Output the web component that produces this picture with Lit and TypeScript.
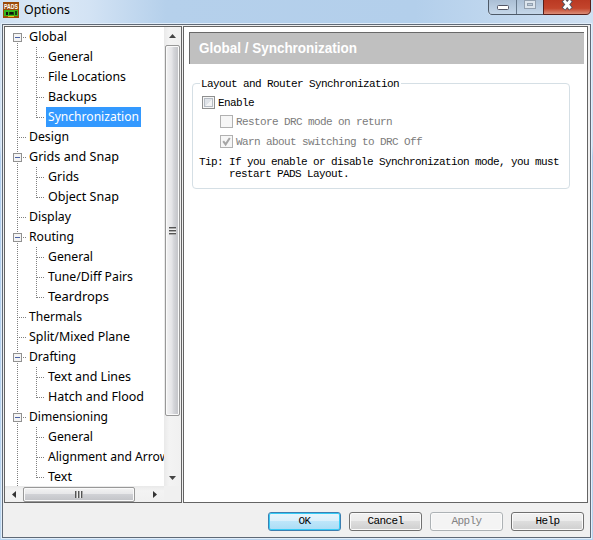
import { LitElement, html, css, svg } from "lit";
import { customElement, property } from "lit/decorators.js";
import { classMap } from "lit/directives/class-map.js";

type Row = { text: string; width: number; level: number; open?: boolean; last?: boolean; selected?: boolean };

const ROWS: Row[] = [
  { text: "Global", width: 38, level: 0, open: true },
  { text: "General", width: 45, level: 1 },
  { text: "File Locations", width: 78, level: 1 },
  { text: "Backups", width: 49, level: 1 },
  { text: "Synchronization", width: 91, level: 1, last: true, selected: true },
  { text: "Design", width: 40, level: 0 },
  { text: "Grids and Snap", width: 90, level: 0, open: true },
  { text: "Grids", width: 31, level: 1 },
  { text: "Object Snap", width: 71, level: 1, last: true },
  { text: "Display", width: 42, level: 0 },
  { text: "Routing", width: 45, level: 0, open: true },
  { text: "General", width: 45, level: 1 },
  { text: "Tune/Diff Pairs", width: 85, level: 1 },
  { text: "Teardrops", width: 61, level: 1, last: true },
  { text: "Thermals", width: 53, level: 0 },
  { text: "Split/Mixed Plane", width: 101, level: 0 },
  { text: "Drafting", width: 47, level: 0, open: true },
  { text: "Text and Lines", width: 83, level: 1 },
  { text: "Hatch and Flood", width: 96, level: 1, last: true },
  { text: "Dimensioning", width: 79, level: 0, open: true },
  { text: "General", width: 45, level: 1 },
  { text: "Alignment and Arrows", width: 127, level: 1 },
  { text: "Text", width: 24, level: 1, last: true },
];

@customElement("fit-text")
class FitText extends LitElement {
  @property() text = "";
  @property({ type: Number }) width = 0;
  @property({ type: Number }) size = 13;
  @property() weight = "400";
  @property() family = "Noto Sans";
  static styles = css`
    :host { display: block; height: 20px; letter-spacing: 0; }
    svg { display: block; overflow: visible; height: 20px; }
    text { fill: currentColor; }
  `;
  render() {
    return html`<svg width=${this.width} height="20">
      ${svg`<text x="0" y="14" textLength=${this.width} lengthAdjust="spacingAndGlyphs" font-size=${this.size} font-weight=${this.weight} font-family="${this.family}, sans-serif">${this.text}</text>`}
    </svg>`;
  }
}

@customElement("options-tree")
class OptionsTree extends LitElement {
  static styles = css`
    :host { display: grid; grid-template: 459px 16px / 159px 17px; box-sizing: border-box; width: 178px; height: 477px; border: 1px solid #646464; background: #fff; color: #000; }
    .rows { overflow: hidden; }
    .row { display: flex; height: 20px; }
    .guide { flex: none; display: block; }
    .label { flex: none; padding: 0 1px 0 2px; margin-left: -2px; height: 20px; }
    .label.selected { background: #3399ff; color: #fff; padding-right: 2px; }
    .v { display: flex; flex-direction: column; align-items: center; background: linear-gradient(90deg, #e9e9e9, #f3f3f3 30%, #f0f0f0); }
    .h { display: flex; align-items: center; background: linear-gradient(#e9e9e9, #f3f3f3 30%, #f0f0f0); }
    .corner { background: #f0f0f0; }
    .up { height: 18px; } .down { height: 17px; }
    .arrow { display: grid; place-items: center; flex: none; }
    .arrow svg { display: block; }
    .space { flex: 1; }
    .thumb { box-sizing: border-box; display: flex; align-items: center; justify-content: center; border: 1px solid #989898; border-radius: 2px; box-shadow: inset 0 0 0 1px #fafafa; flex: none; }
    .v .thumb { width: 15px; height: 371px; background: linear-gradient(90deg, #f3f3f3, #e4e4e7 45%, #d4d5d9 60%, #c0c1c5); }
    .h .thumb { height: 15px; width: 112px; background: linear-gradient(#f3f3f3, #e7e7e9 45%, #d0d1d5 50%, #c2c3c7); }
    .v .grip { width: 7px; height: 8px; background: repeating-linear-gradient(#555 0 1px, #aaa 1px 2px, #eee 2px 3px); }
    .h .grip { width: 8px; height: 7px; background: repeating-linear-gradient(90deg, #555 0 1px, #aaa 1px 2px, #eee 2px 3px); }
    .left, .right { width: 18px; }
  `;
  guide(r: Row, i: number) {
    const w = r.level ? 43 : 24;
    const dash = "1 1";
    return svg`<svg class="guide" width=${w} height="20" shape-rendering="crispEdges" fill="none" stroke="#808080">
      <path stroke-dasharray=${dash} d=${i === 0 ? "M12.5 10V20" : "M12.5 0V20"} />
      ${r.level
        ? svg`<path stroke-dasharray=${dash} d=${r.last ? "M31.5 0V11" : "M31.5 0V20"} /><path stroke-dasharray=${dash} d="M32 10.5H40" />`
        : svg`<path stroke-dasharray=${dash} d="M14 10.5H21" />`}
      ${r.open
        ? svg`<rect x="8.5" y="6.5" width="8" height="8" fill="#f4f4f4" stroke="#919191" /><path stroke="#4b63a7" d="M10 10.5H15" />`
        : null}
    </svg>`;
  }
  render() {
    return html`
      <div class="rows">
        ${ROWS.map((r, i) => html`<div class="row">${this.guide(r, i)}<div class=${classMap({ label: true, selected: !!r.selected })}><fit-text .text=${r.text} .width=${r.width}></fit-text></div></div>`)}
      </div>
      <div class="v">
        <div class="arrow up"><svg width="7" height="4"><path d="M0 4L3.5 0L7 4z" fill="#444" /></svg></div>
        <div class="thumb"><div class="grip"></div></div>
        <div class="space"></div>
        <div class="arrow down"><svg width="7" height="4"><path d="M0 0L3.5 4L7 0z" fill="#444" /></svg></div>
      </div>
      <div class="h">
        <div class="arrow left"><svg width="4" height="7"><path d="M4 0L0 3.5L4 7z" fill="#333" /></svg></div>
        <div class="thumb"><div class="grip"></div></div>
        <div class="space"></div>
        <div class="arrow right"><svg width="4" height="7"><path d="M0 0L4 3.5L0 7z" fill="#333" /></svg></div>
      </div>
      <div class="corner"></div>`;
  }
}

@customElement("app-root")
class AppRoot extends LitElement {
  static styles = css`
    :host { display: flex; flex-direction: column; width: 593px; height: 540px; box-sizing: border-box; overflow: hidden; background: linear-gradient(#d5e4f4, #cfe0f2 27%, #b0cdec 29%, #b9d4ee); font: 11px/12px "Liberation Mono", monospace; letter-spacing: -0.6px; color: #000; }
    .title { display: flex; height: 24px; flex: none; background: linear-gradient(90deg, #cfe0f2, #dce9f6 8%, #d3e3f4 15%, #b5d0eb 28%, #b3cfeb 70%, #cfe0f2); }
    .logo { margin: 2px 5px 0 3px; letter-spacing: 0; overflow: visible; }
    .name { width: 464px; }
    .controls { display: block; }
    .body { display: flex; flex-direction: column; box-sizing: border-box; width: 589px; height: 514px; margin-left: 2px; border: 1px solid #5f6976; background: #f0f0f0; box-shadow: 0 0 0 1px #e2eefa; }
    .panes { display: flex; gap: 1px; padding: 1px 0 0 1px; }
    .page { box-sizing: border-box; width: 405px; height: 477px; border: 1px solid #646464; background: #fff; padding: 5px 3px 0 5px; }
    .banner { box-sizing: border-box; height: 32px; border: solid #696969; border-width: 1px 0 0 1px; background: #c0c0c0; color: #fff; padding: 6px 0 0 9px; }
    .group { box-sizing: border-box; width: 378px; height: 106px; border: 1px solid #d5dfe5; border-radius: 4px; margin: 19px 0 0 3px; padding-left: 6px; }
    .legend { display: block; width: 200px; margin: -7px 0 0 1px; padding: 1px 0 0 1px; height: 12px; background: #fff; }
    .check { display: flex; align-items: center; gap: 3px; height: 13px; margin: 6px 0 0 3px; }
    .sub { margin: 6px 0 0 21px; color: #7b7b7b; }
    .sub + .sub { margin-top: 7px; }
    .tip { display: grid; grid-template-columns: 30px 1fr; margin-top: 8px; white-space: pre; }
    .buttons { display: flex; gap: 8px; margin: 9px 0 0 265px; }
    .btn { display: block; box-sizing: border-box; width: 73px; height: 19px; border: 1px solid #707070; border-radius: 3px; text-align: center; line-height: 17px; background: linear-gradient(#f2f2f2, #ebebeb 50%, #dddddd 50%, #cfcfcf); box-shadow: inset 0 0 0 1px #fbfbfb; }
    .ok { border-color: #3c7fb1; box-shadow: inset 0 0 0 1px #35cbf6; background: linear-gradient(#e9f5fc, #d9effb 50%, #bde6fa 50%, #aadcf5); }
    .off { border-color: #adb2b5; background: #f4f4f4; color: #838383; }
  `;
  box(disabled: boolean, checked: boolean) {
    return svg`<svg width="13" height="13" shape-rendering="crispEdges">
      <rect x=".5" y=".5" width="12" height="12" fill="#f6f6f6" stroke=${disabled ? "#b1b1b1" : "#8e8f8f"} />
      ${disabled ? null : svg`<rect x="2.5" y="2.5" width="8" height="8" fill="#dfe3e8" stroke="#b6bcc4" /><path d="M4 10V9L9 4H10V10z" fill="#f3f4f5" />`}
      ${checked ? svg`<path shape-rendering="auto" d="M3.2 6.2L5.6 9.4L9.8 3" fill="none" stroke="#a5a5a5" stroke-width="2" />` : null}
    </svg>`;
  }
  render() {
    return html`
      <div class="title">
        <svg class="logo" width="16" height="16" shape-rendering="crispEdges">
          <rect width="16" height="16" fill="#9c4a08" />
          <text x="1" y="6.500" textLength="14" lengthAdjust="spacingAndGlyphs" fill="#fff" font-family="Liberation Sans" font-size="6.500" font-weight="700">PADS</text>
          <rect x="1" y="8" width="14" height="6" fill="#39b51c" /><rect x="3" y="10" width="2" height="3" fill="#111" /><rect x="6" y="10" width="5" height="3" fill="#174a10" /><rect x="7" y="10" width="3" height="2" fill="#111" /><rect x="12" y="9" width="2" height="4" fill="#173d10" /><rect x="5" y="14" width="6" height="1" fill="#e5c51c" />
        </svg>
        <fit-text class="name" .text=${"Options"} .width=${46}></fit-text>
        <svg class="controls" width="104" height="16">
          <defs>
            <linearGradient id="g" x2="0" y2="1"><stop offset="0" stop-color="#a9bdd3" /><stop offset="1" stop-color="#c6d8ea" /></linearGradient>
            <linearGradient id="r" x2="0" y2="1"><stop offset="0" stop-color="#b93822" /><stop offset=".6" stop-color="#c3452c" /><stop offset="1" stop-color="#dd9480" /></linearGradient>
          </defs>
          <path d="M0 0V11Q0 15 4 15H99Q103 15 103 11V0z" fill="#eaf3fb" />
          <path d="M.5 -1V10Q.5 14.500 4 14.500H56V-1z" fill="url(#g)" stroke="#4e5a68" />
          <path d="M55.500 -1V14.500H98Q102.500 14.500 102.500 10V-1z" fill="url(#r)" stroke="#571f1a" />
          <path d="M28.500 0V14" stroke="#66788c" />
          <rect x="9.500" y="5.500" width="11" height="4" rx="1" fill="#fff" stroke="#535666" />
          <rect x="36.500" y=".5" width="11" height="8" fill="#dde5ed" stroke="#93a0af" /><rect x="39.500" y="3.500" width="5" height="2" fill="#bccbd9" stroke="#93a0af" />
          <path d="M75.500 0L83 9M83 0L75.500 9" stroke="#53535f" stroke-width="5" /><path d="M76 .5L82.500 8.500M82.500 .5L76 8.500" stroke="#fff" stroke-width="3" />
        </svg>
      </div>
      <div class="body">
        <div class="panes">
          <options-tree></options-tree>
          <div class="page">
            <div class="banner"><fit-text .text=${"Global / Synchronization"} .width=${158} size="14" weight="700" family="Liberation Sans"></fit-text></div>
            <div class="group">
              <span class="legend">Layout and Router Synchronization</span>
              <div class="check">${this.box(false, false)}Enable</div>
              <div class="check sub">${this.box(true, false)}Restore DRC mode on return</div>
              <div class="check sub">${this.box(true, true)}Warn about switching to DRC Off</div>
              <div class="tip"><span>Tip:</span><span>If you enable or disable Synchronization mode, you must
restart PADS Layout.</span></div>
            </div>
          </div>
        </div>
        <div class="buttons">
          <span class="btn ok">OK</span><span class="btn">Cancel</span><span class="btn off">Apply</span><span class="btn">Help</span>
        </div>
      </div>`;
  }
}
